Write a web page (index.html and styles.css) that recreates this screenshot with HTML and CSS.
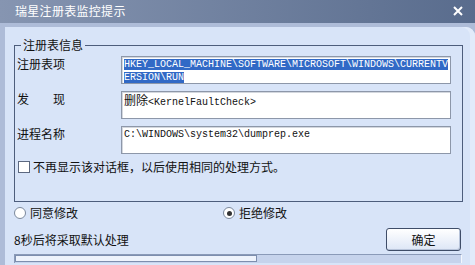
FILE: index.html
```html
<!DOCTYPE html>
<html lang="zh-CN">
  <head>
    <meta charset="UTF-8" />
    <title>瑞星注册表监控提示</title>
    <link rel="stylesheet" href="styles.css">
  </head>
  <body>
    <div class="window">
      <div class="titlebar">
        <span class="title">瑞星注册表监控提示</span>
        <svg class="close" width="10" height="10" viewBox="0 0 10 10">
          <path d="M1 1 L9 9 M9 1 L1 9" stroke="#fff" stroke-width="2" />
        </svg>
      </div>
      <div class="panel">
        <fieldset class="group">
          <legend>注册表信息</legend>
          <div class="rows">
            <div class="label">注册表项</div>
            <div class="field"><span class="selected">HKEY_LOCAL_MACHINE\SOFTWARE\MICROSOFT\WINDOWS\CURRENTV<br>ERSION\RUN</span></div>
            <div class="label">发　　现</div>
            <div class="field"><span class="cjk">删除</span>&lt;KernelFaultCheck&gt;</div>
            <div class="label">进程名称</div>
            <div class="field">C:\WINDOWS\system32\dumprep.exe</div>
          </div>
          <label class="check">
            <span class="box"></span>
            不再显示该对话框，以后使用相同的处理方式。
          </label>
        </fieldset>
        <div class="choices">
          <label class="choice"><span class="radio"></span>同意修改</label>
          <label class="choice"><span class="radio on"></span>拒绝修改</label>
        </div>
        <div class="footer">
          <span>8秒后将采取默认处理</span>
          <button class="ok">确定</button>
        </div>
        <div class="progress">
          <div class="bar" style="width: 240px"></div>
        </div>
      </div>
    </div>
  </body>
</html>
```

FILE: styles.css
```css
body {
  margin: 0;
  font-family: "Noto Sans CJK SC", sans-serif;
  font-size: 12px;
  color: #111;
}
.window {
  width: 475px;
  height: 265px;
  background-color: #aebcd8;
  display: flex;
  flex-direction: column;
  overflow: hidden;
}
.titlebar {
  height: 21px;
  flex: none;
  background: linear-gradient(to right, #8695b1, #596c8d);
  color: white;
  display: flex;
  align-items: center;
  justify-content: space-between;
  padding: 0 12px 2px 15px;
}
.title {
  letter-spacing: 0.3px;
}
.panel {
  flex: 1;
  margin: 4px 0 0 5px;
  padding: 0 0 0 9px;
  background-color: #d8e4f8;
  border-radius: 0 9px 0 0;
  box-shadow: inset -5px 0 0 #e2ebfa;
}
.group {
  width: 449px;
  box-sizing: border-box;
  margin: 11px 0 0 0;
  padding: 4px 9px 28px 2px;
  border: 1px solid #4d5d7c;
}
.group legend {
  padding: 0 2px;
  margin-left: 4px;
  line-height: 14px;
}
.rows {
  display: grid;
  grid-template-columns: 104px 330px;
  row-gap: 7px;
}
.label {
  line-height: 14px;
  padding-top: 1px;
}
.field {
  height: 28px;
  box-sizing: border-box;
  background-color: white;
  border: 1px solid #8d97a9;
  box-shadow: inset 1px 1px 0 #d3d7de;
  padding: 1px 0 0 2px;
  font-family: "Liberation Mono", "Noto Sans CJK SC", monospace;
  font-size: 10px;
  line-height: 13px;
}
.cjk {
  font-family: "Noto Sans CJK SC", sans-serif;
  font-size: 12px;
}
.selected {
  background-color: #3169c6;
  color: white;
}
.check {
  display: flex;
  align-items: center;
  gap: 3px;
  margin: 6px 0 0 1px;
  line-height: 13px;
}
.box {
  width: 10px;
  height: 10px;
  border: 1px solid #5c6880;
  background-color: white;
}
.choices {
  display: flex;
  margin-top: 4px;
}
.choice {
  display: flex;
  align-items: center;
  gap: 4px;
  width: 209px;
  line-height: 14px;
}
.radio {
  width: 10px;
  height: 10px;
  border: 1px solid #7b889c;
  border-radius: 50%;
  background-color: white;
  display: flex;
  align-items: center;
  justify-content: center;
}
.radio.on::after {
  content: "";
  width: 5px;
  height: 5px;
  border-radius: 50%;
  background-color: #333;
}
.footer {
  display: flex;
  justify-content: space-between;
  align-items: center;
  margin-top: 8px;
  padding-right: 14px;
}
.ok {
  width: 75px;
  height: 23px;
  font-family: "Noto Sans CJK SC", sans-serif;
  font-size: 12px;
  color: #111;
  border: 1px solid #3f4d68;
  border-radius: 3px;
  background: linear-gradient(#ffffff, #dde6f6);
  box-shadow: inset -1px -1px 0 #b8c4da;
  padding: 0;
}
.progress {
  margin-top: 3px;
  width: 448px;
  height: 9px;
  box-sizing: border-box;
  border-top: 1px solid #8a9ab8;
  border-left: 1px solid #8a9ab8;
  border-right: 1px solid #f4f7fd;
  background-color: #c6d3ec;
}
.bar {
  height: 5px;
  border: 1px solid #7d8eae;
  background-color: #eef3fc;
}
```
